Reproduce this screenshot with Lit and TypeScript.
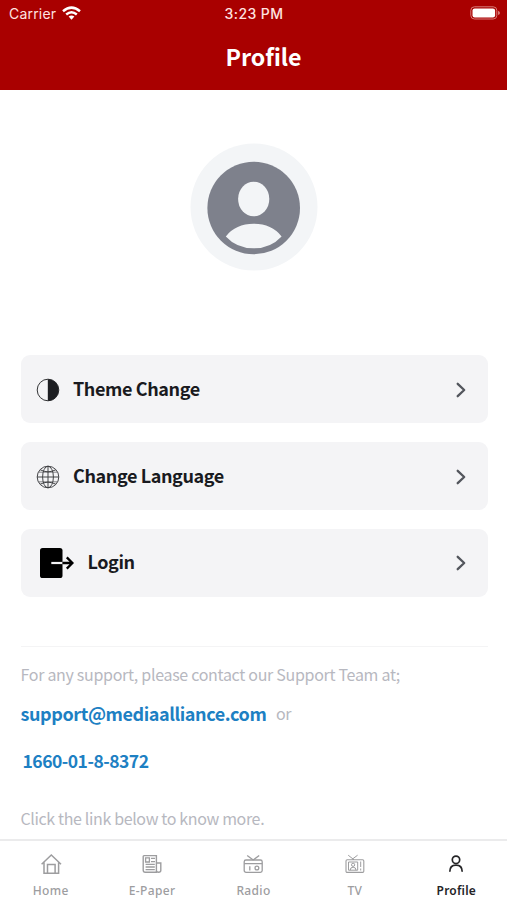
import { LitElement, html, css, svg } from "lit";
import { customElement } from "lit/decorators.js";

const themeIcon = html`<svg width="24" height="24" viewBox="0 0 24 24"><circle cx="12" cy="12" r="10.8" fill="none" stroke="#333436" stroke-width="1"/><path d="M11.8 1.2a10.8 10.8 0 0 1 0 21.6z" fill="#1d1e22"/></svg>`;

const globeIcon = html`<svg width="24" height="24" viewBox="0 0 24 24" fill="none" stroke="#3c3d40" stroke-width=".95"><circle cx="12" cy="12" r="10.8"/><ellipse cx="12" cy="12" rx="5.4" ry="10.8"/><path d="M12 1.2v21.6M1.2 12h21.6M4.2 4.8q7.8 4 15.6 0M4.2 19.2q7.8-4 15.6 0"/><path d="M2.5 7.2h19M2.5 16.8h19" stroke-width=".6"/></svg>`;

const loginIcon = html`<svg width="36" height="32" viewBox="0 0 36 32"><rect x="1" y="1" width="22.5" height="30" rx="2.6" fill="#000"/><path d="M12.3 16H23.5" stroke="#f4f4f6" stroke-width="2.2"/><path d="M23.5 16h9.2M27.8 10.4l5.6 5.6-5.6 5.6" fill="none" stroke="#000" stroke-width="2.3"/></svg>`;

const chevron = html`<svg width="12" height="16" viewBox="0 0 12 16" fill="none" stroke="#53565d" stroke-width="2.3" stroke-linecap="round" stroke-linejoin="round"><path d="M2.7 1.8 9.2 8l-6.5 6.2"/></svg>`;

const tabIcons = {
  home: svg`<path d="M1.6 11.2 11.3 2l9.7 9.2M4 9.4v10.8h14.6V9.4M7.5 20.2v-8.6h7.6v8.6" stroke-width="1.5"/>`,
  paper: svg`<path d="M3 2.6h12.4v16.6H4.2Q2.2 19.2 2.2 17V3.4q0-.8.8-.8zM15.4 10h4.4v7.5q0 1.7-2.2 1.7t-2.2-1.7" stroke-width="1.4"/><path d="M4.6 4.8h3.8V9H4.6zM10 5.4h4M10 8.7h4M4.6 11.4h9.2M4.6 14h9.2M4.6 16.6h9.2" stroke-width="1.3"/>`,
  radio: svg`<rect x="2.2" y="7" width="18" height="12.4" rx="1.8" stroke-width="1.3"/><path d="M11.2 7 5.2 2.4M11.2 7l6-4.6M2.2 10.6h18M7.8 13.2v4.4" stroke-width="1.3"/><circle cx="14.9" cy="15" r="1.9" stroke-width="1.3"/>`,
  tv: svg`<rect x="2" y="6.8" width="17.8" height="12.6" rx="1.2" stroke-width="1.1"/><path d="M10 6.8 4.2 2.2M8 6.4l5.6-4.2M4.5 9v8.2h9.2V9zM6.2 17.2q0-3 2.9-3t2.9 3M16.7 8.5v5.5M16.7 15.5v2" stroke-width="1"/><circle cx="9.1" cy="11.8" r="1.6" stroke-width="1"/>`,
  profile: svg`<circle cx="11" cy="6.8" r="3.7" stroke-width="1.7"/><path d="M4.8 18.8q0-6.6 6.2-6.6t6.2 6.6" stroke-width="1.7"/>`,
};

@customElement("app-root")
export class AppRoot extends LitElement {
  static styles = css`
    :host { display: flex; flex-direction: column; height: 900px; overflow: hidden; background: #fff; font-family: "Noto Sans CJK SC", "Noto Sans", sans-serif; }
    svg { display: block; flex: none; }
    header { height: 90px; box-sizing: border-box; background: #a90000; color: #fff; flex: none; }
    .status { height: 28px; display: grid; grid-template-columns: 1fr auto 1fr; align-items: center; font: 400 14px/28px Inter, sans-serif; color: #ffe3e0; padding: 0 7px 0 9px; }
    .carrier { display: flex; align-items: center; gap: 5.5px; font-size: 14px; letter-spacing: .2px; }
    .carrier svg { margin-bottom: 2px; }
    .time { font-weight: 500; letter-spacing: .42px; margin-right: 1px; }
    .battery { justify-self: end; margin-bottom: 2px; }
    h1 { margin: 12px 0 0 20px; text-align: center; font-size: 23.2px; line-height: 32px; font-weight: 700; }
    main { flex: 1; min-height: 0; overflow: hidden; padding: 53px 19.5px 0 20.5px; }
    .avatar { display: block; width: 128px; height: 128px; margin: 0 auto; }
    .menu { display: grid; grid-auto-rows: 68.4px; gap: 18.5px; margin-top: 84px; }
    .row { display: flex; align-items: center; background: #f4f4f6; border-radius: 9px; padding: 0 21px 0 15px; color: #191a20; font-size: 18px; font-weight: 700; letter-spacing: -.4px; }
    .label { flex: 1; padding: 0 0 3px 13.5px; line-height: 28px; }
    .row svg:first-child, .row svg:last-child { margin-top: 1px; }
    .login { padding-left: 18px; }
    .login .label { padding-left: 13px; }
    .support { margin-top: 48.8px; border-top: 1px solid #f4f4f5; color: #b7b8c0; font-size: 16px; line-height: 28px; padding-top: 13px; }
    p { margin: 0; white-space: nowrap; }
    .ask { letter-spacing: -.3px; }
    .contact { margin-top: 11px; display: flex; gap: 9.5px; }
    .link { color: #1d80c3; font-weight: 700; font-size: 18px; }
    .mail { letter-spacing: -.41px; }
    .or { letter-spacing: -.2px; }
    .phone { margin: 20px 0 0 2px; font-size: 17.5px; letter-spacing: -.5px; }
    .more { margin-top: 29px; letter-spacing: -.36px; }
    nav { height: 61px; box-sizing: border-box; border-top: 2px solid #ebebec; flex: none; display: grid; grid-template-columns: repeat(5, 1fr); background: #fff; }
    .tab { display: flex; flex-direction: column; align-items: center; color: #9d9d9f; font: 500 12px/16px "Noto Sans", sans-serif; padding-top: 12px; gap: 8px; letter-spacing: .35px; }
    .tab svg { stroke: currentColor; fill: none; }
    .active { color: #242426; font-weight: 600; letter-spacing: .2px; }
  `;

  private tab(icon: keyof typeof tabIcons, label: string) {
    return html`<div class="tab ${icon === "profile" ? "active" : ""}"><svg width="22" height="22" viewBox="0 0 22 22">${tabIcons[icon]}</svg><span>${label}</span></div>`;
  }

  render() {
    return html`
      <header>
        <div class="status">
          <span class="carrier"><span>Carrier</span><svg width="19" height="14" viewBox="0 0 19 14" fill="none" stroke="#fff" stroke-width="2.5"><path d="M1 5.2q8.5-7.2 17 0M4.2 8.5q5.3-4.4 10.6 0"/><path d="M6.6 10.6q2.9-2.2 5.8 0L9.5 13.7z" fill="#fff" stroke="none"/></svg></span>
          <span class="time">3:23 PM</span>
          <svg class="battery" width="31" height="14" viewBox="0 0 31 14"><rect x="1.8" y=".8" width="26" height="12.2" rx="3.6" fill="none" stroke="#d77b78" stroke-width="1"/><rect x="3.5" y="2.4" width="22.6" height="9" rx="2.2" fill="#fff"/><path d="M29 4.7q2 .7 2 2.2t-2 2.2z" fill="#d77b78"/></svg>
        </div>
        <h1>Profile</h1>
      </header>
      <main>
        <svg class="avatar" viewBox="0 0 128 128"><circle cx="64" cy="64" r="63.5" fill="#f3f5f7"/><circle cx="63.7" cy="65" r="46.3" fill="#7e818c"/><ellipse cx="63.7" cy="56" rx="15.6" ry="17.2" fill="#f3f5f7"/><path d="M35.8 93.4q10-12.6 27.9-12.6t27.9 12.6q-11 11.9-27.9 11.9t-27.9-11.9z" fill="#f3f5f7"/></svg>
        <div class="menu">
          <div class="row">${themeIcon}<span class="label">Theme Change</span>${chevron}</div>
          <div class="row">${globeIcon}<span class="label">Change Language</span>${chevron}</div>
          <div class="row login">${loginIcon}<span class="label">Login</span>${chevron}</div>
        </div>
        <section class="support">
          <p class="ask">For any support, please contact our Support Team at;</p>
          <p class="contact"><span class="link mail">support@mediaalliance.com</span><span class="or">or</span></p>
          <p class="link phone">1660-01-8-8372</p>
          <p class="more">Click the link below to know more.</p>
        </section>
      </main>
      <nav>${this.tab("home", "Home")}${this.tab("paper", "E-Paper")}${this.tab("radio", "Radio")}${this.tab("tv", "TV")}${this.tab("profile", "Profile")}</nav>`;
  }
}
